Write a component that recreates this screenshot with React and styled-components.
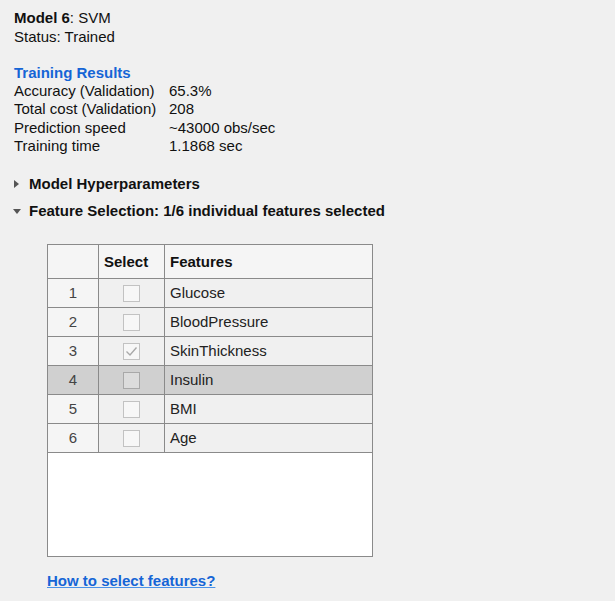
import React from 'react';
import styled, { createGlobalStyle } from 'styled-components';

const GlobalStyle = createGlobalStyle`
  html, body {
    margin: 0;
    background: #f0f0f0;
  }
  body {
    font-family: 'Liberation Sans', Arial, sans-serif;
    font-size: 15px;
    color: #111;
  }
`;

const Page = styled.div`
  padding: 8px 14px;
  width: 615px;
  height: 601px;
  box-sizing: border-box;
`;

const Line = styled.div`
  line-height: ${(p) => p.lh || 18.3}px;
  white-space: nowrap;
`;

const Heading = styled.div`
  margin-top: 18px;
  color: #1565d6;
  font-weight: bold;
  line-height: 18px;
`;

const Results = styled.div`
  display: grid;
  grid-template-columns: 155px auto;
  line-height: 18.3px;
`;

const Section = styled.div`
  display: flex;
  align-items: center;
  gap: ${(p) => p.gap}px;
  font-weight: bold;
  line-height: 18px;
  margin-top: ${(p) => p.mt}px;
`;

const Arrow = styled.span`
  width: 0;
  height: 0;
  border-style: solid;
  ${(p) =>
    p.open
      ? `border-width: 5px 4px 0 4px; border-color: #555 transparent transparent transparent; margin-left: -1px;`
      : `border-width: 4.5px 0 4.5px 5px; border-color: transparent transparent transparent #555; margin-right: 1px;`}
`;

const Box = styled.div`
  margin: 24px 0 0 33px;
  width: 326px;
  height: 313px;
  box-sizing: border-box;
  border: 1px solid #8a8a8a;
  background: #fff;
`;

const Table = styled.table`
  border-collapse: separate;
  border-spacing: 0;
  width: 324px;
  table-layout: fixed;
  font-size: 15px;
`;

const Th = styled.th`
  height: 34px;
  box-sizing: border-box;
  padding: 0 0 0 5px;
  text-align: left;
  font-weight: bold;
  background: #f5f5f5;
  border-bottom: 1px solid #8a8a8a;
  border-right: ${(p) => (p.last ? 'none' : '1px solid #8a8a8a')};
  color: #111;
`;

const NumCell = styled.td`
  height: 29px;
  box-sizing: border-box;
  text-align: center;
  color: #444;
  background: ${(p) => (p.sel ? '#d0d0d0' : '#f5f5f5')};
  border-bottom: 1px solid #8a8a8a;
  border-right: 1px solid #8a8a8a;
  padding: 0 0 2px;
`;

const Cell = styled.td`
  height: 29px;
  box-sizing: border-box;
  padding: 0 0 2px 5px;
  color: #222;
  background: ${(p) => (p.sel ? '#d0d0d0' : '#f0f0f0')};
  border-bottom: 1px solid #8a8a8a;
  border-right: ${(p) => (p.last ? 'none' : '1px solid #8a8a8a')};
`;

const CheckCell = styled(Cell)`
  padding: 0 0 1px;
  text-align: center;
`;

const Check = styled.span`
  display: inline-flex;
  align-items: center;
  justify-content: center;
  vertical-align: middle;
  width: 17px;
  height: 17px;
  box-sizing: border-box;
  border: 1px solid ${(p) => (p.sel ? '#a8a8a8' : '#c2c2c2')};
  background: ${(p) => (p.sel ? '#dcdcdc' : '#f7f7f7')};
`;

const Link = styled.a`
  display: inline-block;
  margin: 15px 0 0 33px;
  color: #1565d6;
  font-weight: bold;
  line-height: 18px;
  text-decoration: underline;
  text-decoration-color: #4a92e8;
`;

const features = [
  { name: 'Glucose', checked: false },
  { name: 'BloodPressure', checked: false },
  { name: 'SkinThickness', checked: true },
  { name: 'Insulin', checked: false },
  { name: 'BMI', checked: false },
  { name: 'Age', checked: false },
];

export default function App() {
  return (
    <>
      <GlobalStyle />
      <Page>
        <Line lh={19}>
          <b>Model 6</b>: SVM
        </Line>
        <Line lh={19}>Status: Trained</Line>
        <Heading>Training Results</Heading>
        <Results>
          <span>Accuracy (Validation)</span>
          <span>65.3%</span>
          <span>Total cost (Validation)</span>
          <span>208</span>
          <span>Prediction speed</span>
          <span>~43000 obs/sec</span>
          <span>Training time</span>
          <span>1.1868 sec</span>
        </Results>
        <Section mt={20} gap={9}>
          <Arrow />
          Model Hyperparameters
        </Section>
        <Section mt={9} gap={8}>
          <Arrow open />
          Feature Selection: 1/6 individual features selected
        </Section>
        <Box>
          <Table>
            <colgroup>
              <col style={{ width: 51 }} />
              <col style={{ width: 66 }} />
              <col />
            </colgroup>
            <thead>
              <tr>
                <Th />
                <Th>Select</Th>
                <Th last>Features</Th>
              </tr>
            </thead>
            <tbody>
              {features.map((f, i) => {
                const sel = i === 3;
                return (
                  <tr key={f.name}>
                    <NumCell sel={sel}>{i + 1}</NumCell>
                    <CheckCell sel={sel}>
                      <Check sel={sel}>
                        {f.checked && (
                          <svg width="13" height="11" viewBox="0 0 13 11">
                            <path d="M1.5 5.5 L5 9 L11.5 1.5" fill="none" stroke="#a9a9a9" strokeWidth="1.4" />
                          </svg>
                        )}
                      </Check>
                    </CheckCell>
                    <Cell sel={sel} last>
                      {f.name}
                    </Cell>
                  </tr>
                );
              })}
            </tbody>
          </Table>
        </Box>
        <Link href="#">How to select features?</Link>
      </Page>
    </>
  );
}
